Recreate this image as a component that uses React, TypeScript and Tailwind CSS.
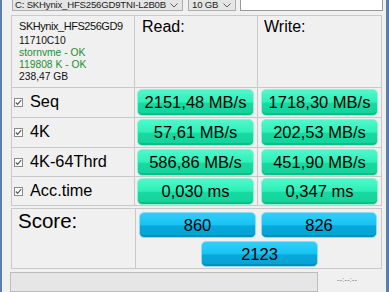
import React from "react";

const Chevron = () => (
  <svg width="8" height="5" viewBox="0 0 8 5" className="shrink-0">
    <polyline points="0.5,0.5 4,4 7.5,0.5" fill="none" stroke="#606060" strokeWidth="1" />
  </svg>
);

const Check = () => (
  <div className="w-[9px] h-[9px] border border-[#8a8a8a] bg-white flex items-center justify-center shrink-0">
    <svg width="7" height="7" viewBox="0 0 7 7">
      <polyline points="0.8,3.5 2.6,5.4 6.2,1.2" fill="none" stroke="#555" strokeWidth="1.1" />
    </svg>
  </div>
);

const Green = ({ v }: { v: string }) => (
  <div className="w-[117px] h-[27px] rounded-[5px] border border-[#8ff0d2] bg-[linear-gradient(180deg,#4ff8cb_0%,#2ff0b9_48%,#18daa1_54%,#12d39b_100%)] shadow-[inset_0_-2px_0_rgba(0,110,70,0.22)] flex items-center justify-center text-[16.5px] leading-none text-black">
    {v}
  </div>
);

const Blue = ({ v, w = 117 }: { v: string; w?: number }) => (
  <div
    className="h-[26px] rounded-[5px] border border-[#8cdcf6] bg-[linear-gradient(180deg,#2ed0fa_0%,#1ac3f3_48%,#08a8da_54%,#06a3d5_100%)] shadow-[inset_0_-2px_0_rgba(0,70,110,0.22)] flex items-center justify-center text-[16.5px] leading-none text-black"
    style={{ width: w }}
  >
    {v}
  </div>
);

const rows = [
  { label: "Seq", r: "2151,48 MB/s", w: "1718,30 MB/s" },
  { label: "4K", r: "57,61 MB/s", w: "202,53 MB/s" },
  { label: "4K-64Thrd", r: "586,86 MB/s", w: "451,90 MB/s" },
  { label: "Acc.time", r: "0,030 ms", w: "0,347 ms" },
];

export default function App() {
  return (
    <div className="w-[389px] h-[292px] bg-[#f0f0f0] flex overflow-hidden font-['Liberation_Sans',Arial,sans-serif] text-black">
      <div className="w-[2px] bg-[#5b7fa8] shrink-0" />
      <div className="flex-1 flex flex-col">
        {/* top controls */}
        <div className="flex h-[12px] items-stretch">
          <div className="ml-[10px] w-[171px] border-x border-b border-[#adadad] bg-[#e5e5e5] flex items-center justify-between pl-[2px] pr-[4px]">
            <span className="text-[9.6px] leading-none tracking-[-0.2px] text-[#222]">C: SKHynix_HFS256GD9TNI-L2B0B</span>
            <Chevron />
          </div>
          <div className="ml-[5px] w-[48px] border-x border-b border-[#adadad] bg-[#e5e5e5] flex items-center justify-between pl-[3px] pr-[4px]">
            <span className="text-[9.6px] leading-none tracking-[-0.2px] text-[#222]">10 GB</span>
            <Chevron />
          </div>
          <div className="ml-[4px] w-[143px] border-x border-b border-[#9a9a9a] bg-white" />
        </div>

        {/* results grid */}
        <div className="mt-[4px] ml-[9px] w-[371px] grid grid-cols-[122px_122px_123px] grid-rows-[71px_29px_29px_28px_28px] gap-px bg-[#c9c9c9] border border-[#c9c9c9]">
          <div className="bg-[#f0f0f0] pl-[7px] pt-[4px]">
            <div className="text-[11px] leading-[13px] tracking-[-0.45px] text-[#111]">SKHynix_HFS256GD9</div>
            <div className="mt-[2px] text-[10.3px] leading-[12px] text-[#111]">11710C10</div>
            <div className="text-[10.3px] leading-[12px] text-[#1f8f2f]">stornvme - OK</div>
            <div className="text-[10.3px] leading-[12px] text-[#1f8f2f]">119808 K - OK</div>
            <div className="text-[10.3px] leading-[12px] text-[#111]">238,47 GB</div>
          </div>
          <div className="bg-[#f0f0f0] pl-[7px] pt-[2px] text-[16px] leading-[18px]">Read:</div>
          <div className="bg-[#f0f0f0] pl-[6px] pt-[2px] text-[16px] leading-[18px]">Write:</div>
          {rows.map((row) => (
            <React.Fragment key={row.label}>
              <div className="bg-[#f0f0f0] pl-[2px] flex items-center">
                <Check />
                <span className="ml-[7px] text-[16.3px] leading-none -mt-[2px]">{row.label}</span>
              </div>
              <div className="bg-[#f0f0f0] pl-[2px] flex items-center">
                <Green v={row.r} />
              </div>
              <div className="bg-[#f0f0f0] pl-[3px] flex items-center">
                <Green v={row.w} />
              </div>
            </React.Fragment>
          ))}
        </div>

        {/* score */}
        <div className="mt-[2px] ml-[9px] w-[371px] h-[66px] grid grid-cols-[123px_245px] gap-px bg-[#c9c9c9] border border-[#c9c9c9]">
          <div className="bg-[#f0f0f0] pl-[6px] text-[20.5px] leading-[24px]">Score:</div>
          <div className="bg-[#f0f0f0] pt-[3px] flex flex-col">
            <div className="flex pl-[3px] gap-[5px]">
              <Blue v="860" />
              <Blue v="826" w={116} />
            </div>
            <div className="mt-[3px] ml-[65px]">
              <Blue v="2123" />
            </div>
          </div>
        </div>

        {/* progress */}
        <div className="mt-[3px] flex items-start">
          <div className="ml-[8px] w-[308px] h-[20px] bg-[#e6e6e6] border border-[#bcbcbc]" />
          <div className="ml-[19px] mt-[4px] text-[7px] leading-none text-[#666] tracking-[0.3px]">--:--:--</div>
        </div>
      </div>
      <div className="w-[3px] bg-[#5b7fa8] shrink-0" />
    </div>
  );
}
